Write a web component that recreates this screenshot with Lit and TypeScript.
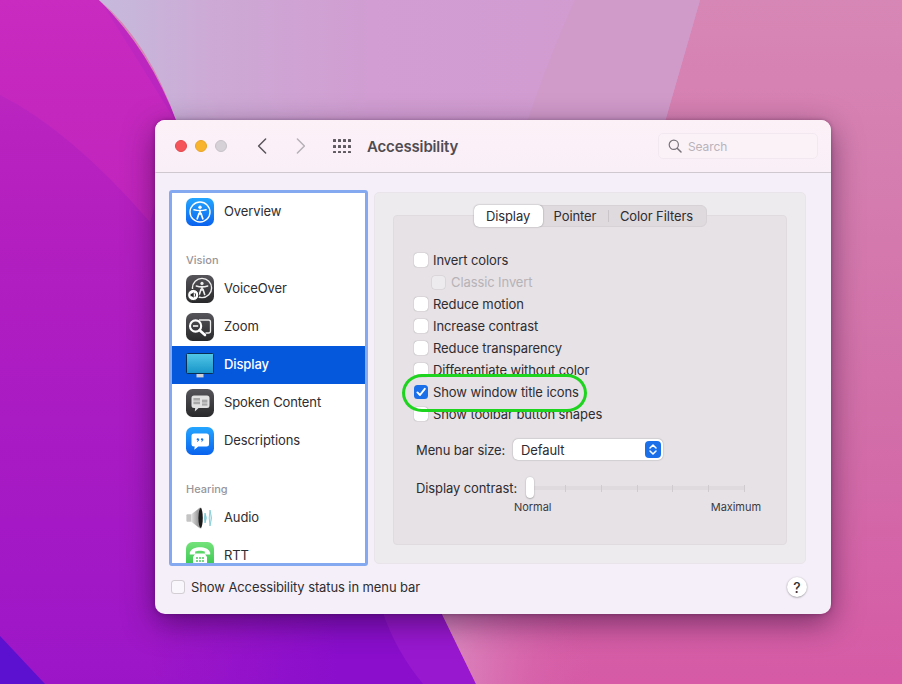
import { LitElement, html, css, svg } from "lit";
import { customElement } from "lit/decorators.js";

const person = (cx: number, cy: number, s = 1, c = "#fff") => svg`
  <g transform="translate(${cx} ${cy}) scale(${s})" fill="none" stroke="${c}">
    <circle cx="0" cy="-5.2" r="1.7" fill="${c}" stroke="none"/>
    <path d="M-6 -2.6 C-3 -1.6 3 -1.6 6 -2.6" stroke-width="1.6" stroke-linecap="round"/>
    <path d="M0 -2 V1.6 M-1 1 L-2.8 6.4 M1 1 L2.8 6.4" stroke-width="1.7" stroke-linecap="round"/>
  </g>`;

const squareDefs = svg`
  <defs>
    <linearGradient id="blue" x1="0" y1="0" x2="0" y2="1"><stop offset="0" stop-color="#24a6ff"/><stop offset="1" stop-color="#0a62ee"/></linearGradient>
    <linearGradient id="dark" x1="0" y1="0" x2="0" y2="1"><stop offset="0" stop-color="#55555a"/><stop offset="1" stop-color="#29292b"/></linearGradient>
    <linearGradient id="green" x1="0" y1="0" x2="0" y2="1"><stop offset="0" stop-color="#74e27a"/><stop offset="1" stop-color="#2fc24a"/></linearGradient>
    <linearGradient id="screen" x1="0" y1="0" x2="0" y2="1"><stop offset="0" stop-color="#52c8e8"/><stop offset="1" stop-color="#1794c8"/></linearGradient>
    <linearGradient id="cone" x1="0" y1="0" x2="1" y2="0"><stop offset="0" stop-color="#e6e6e6"/><stop offset=".65" stop-color="#9a9a9a"/><stop offset="1" stop-color="#d6d6d6"/></linearGradient>
  </defs>`;

const icons: Record<string, unknown> = {
  overview: svg`${squareDefs}<rect width="28" height="28" rx="6.5" fill="url(#blue)"/>
    <circle cx="14" cy="14" r="10" fill="none" stroke="#fff" stroke-width="1.4"/>${person(14, 14.4)}`,
  voiceover: svg`${squareDefs}<rect width="28" height="28" rx="6.5" fill="url(#dark)"/>
    <circle cx="16" cy="13" r="9.6" fill="none" stroke="#eee" stroke-width="1.4"/>${person(16, 13.4, 0.95, "#eee")}
    <circle cx="7.2" cy="20" r="5.6" fill="#fff" stroke="#333" stroke-width="1"/>
    <path d="M4.6 18.8 h1.3 l1.8-1.6 v5.6 l-1.8-1.6 h-1.3z" fill="#222"/>
    <path d="M9 18.2 q1.2 1.8 0 3.6" fill="none" stroke="#222" stroke-width=".9"/>`,
  zoom: svg`${squareDefs}<rect width="28" height="28" rx="6.5" fill="url(#dark)"/>
    <path d="M13 7 h9.5 a2 2 0 0 1 2 2 v9 a2 2 0 0 1-2 2 h-3" fill="none" stroke="#eee" stroke-width="1.3"/>
    <circle cx="9.6" cy="13" r="5.6" fill="none" stroke="#fff" stroke-width="2.1"/>
    <path d="M7 13 h5.2" stroke="#eee" stroke-width="1.7"/>
    <path d="M13.6 17.2 L19 22" stroke="#fff" stroke-width="2.6" stroke-linecap="round"/>`,
  display: svg`${squareDefs}<rect x="10.5" y="22" width="7" height="4.4" fill="#cfcfd6"/>
    <rect x="0.5" y="2.5" width="27" height="20" rx="1" fill="url(#screen)" stroke="#0a2f55" stroke-width="1"/>`,
  spoken: svg`${squareDefs}<rect width="28" height="28" rx="6.5" fill="url(#dark)"/>
    <path d="M8 6.5 h13 a2.5 2.5 0 0 1 2.5 2.5 v7.5 a2.5 2.5 0 0 1-2.5 2.5 h-8.4 l-3.8 3.4 .4-3.4 H8 a2.5 2.5 0 0 1-2.5-2.5 V9 A2.5 2.5 0 0 1 8 6.5z" fill="#e2e2e2"/>
    <rect x="7.4" y="9" width="6.6" height="2.6" fill="#a8a8a8"/><rect x="7.4" y="12.6" width="6.6" height="2.6" fill="#a8a8a8"/>
    <rect x="16" y="10.6" width="5.4" height="3" fill="#a8a8a8"/><rect x="16" y="14.4" width="5.4" height="2.2" fill="#a8a8a8"/>`,
  descriptions: svg`${squareDefs}<rect width="28" height="28" rx="6.5" fill="url(#blue)"/>
    <path d="M8 6.5 h12.5 a2.5 2.5 0 0 1 2.5 2.5 v8 a2.5 2.5 0 0 1-2.5 2.5 h-8.2 l-4 3.2 .4-3.2 H8 a2.5 2.5 0 0 1-2.5-2.5 V9 A2.5 2.5 0 0 1 8 6.5z" fill="#fff"/>
    <circle cx="11.8" cy="12.4" r="1.15" fill="#1272ec"/><circle cx="16" cy="12.4" r="1.15" fill="#1272ec"/>
    <path d="M12.8 12.4 q0 1.6-1.5 2.2 M17 12.4 q0 1.6-1.5 2.2" fill="none" stroke="#1272ec" stroke-width=".9"/>`,
  audio: svg`${squareDefs}<rect x="0.4" y="10.2" width="5" height="7.6" rx="1" fill="#c4c4c4"/>
    <path d="M5 10.4 L14 3.6 Q16 3 16 5 V23 Q16 25 14 24.4 L5 17.6z" fill="url(#cone)"/>
    <ellipse cx="14.6" cy="14" rx="2.2" ry="10" fill="#1c1c1c"/>
    <path d="M19 9 q2.6 5 0 10 M19 9 q-1.2 5 0 10" fill="#8cd4de" stroke="#7cc6d2" stroke-width=".8"/>
    <path d="M24 6 q3 8 0 16 M24 6 q-1.6 8 0 16" fill="#d2f0f4" stroke="#84ccd6" stroke-width=".9"/>`,
  rtt: svg`${squareDefs}<rect width="28" height="28" rx="6.5" fill="url(#green)"/>
    <path d="M3.8 10.6 C6 3.4 22 3.4 24.2 10.6 V12.6 H18.8 V9.6 C16.4 8.6 11.6 8.6 9.2 9.6 V12.6 H3.8z" fill="#fff"/>
    <path d="M9.4 11.4 H18.6 L21 15 V24 H7 V15z" fill="#fff"/>
    <g fill="#4ecb60"><circle cx="11" cy="16" r="1"/><circle cx="14" cy="16" r="1"/><circle cx="17" cy="16" r="1"/><circle cx="11" cy="19" r="1"/><circle cx="14" cy="19" r="1"/><circle cx="17" cy="19" r="1"/><circle cx="11" cy="22" r="1"/><circle cx="14" cy="22" r="1"/><circle cx="17" cy="22" r="1"/></g>`,
};

const side = [
  { k: "overview", t: "Overview" },
  { h: "Vision" },
  { k: "voiceover", t: "VoiceOver" },
  { k: "zoom", t: "Zoom" },
  { k: "display", t: "Display", sel: true },
  { k: "spoken", t: "Spoken Content" },
  { k: "descriptions", t: "Descriptions" },
  { h: "Hearing" },
  { k: "audio", t: "Audio" },
  { k: "rtt", t: "RTT" },
];

const opts = [
  { t: "Invert colors" },
  { t: "Classic Invert", sub: true },
  { t: "Reduce motion" },
  { t: "Increase contrast" },
  { t: "Reduce transparency" },
  { t: "Differentiate without color" },
  { t: "Show window title icons", on: true },
  { t: "Show toolbar button shapes" },
];

@customElement("app-root")
export class AppRoot extends LitElement {
  static styles = css`
    :host {
      display: block; position: relative; width: 902px; height: 684px; overflow: hidden;
      box-sizing: border-box; padding: 120px 0 0 155px;
      font-family: Inter, "Liberation Sans", sans-serif; font-size: 13px; color: #2e2c30;
      letter-spacing: -0.1px;
    }
    .wall { position: absolute; inset: 0; width: 902px; height: 684px; }
    .win {
      position: relative; width: 676px; height: 494px; border-radius: 10px; overflow: hidden;
      background: #f4eff8; display: flex; flex-direction: column;
    }
    .shadow { position: absolute; left: 155px; top: 120px; width: 676px; height: 494px; border-radius: 10px;
      box-shadow: 0 9px 30px rgba(30, 0, 40, .5), 0 0 4px rgba(30, 0, 40, .3); }
    .bar { flex: none; height: 52px; display: flex; align-items: center; background: linear-gradient(#fdf1f8, #f9eff7);
      border-bottom: 1px solid #cfc8cf; padding-left: 20px; }
    .dot { width: 12px; height: 12px; border-radius: 50%; margin-right: 8px; box-sizing: border-box; }
    .red { background: #f5555a; border: 1px solid #e4474c; }
    .yel { background: #f9b42d; border: 1px solid #e8a526; }
    .gry { background: #d5d1d7; border: 1px solid #c6c2c8; margin-right: 0; }
    .nav { display: block; }
    .back { margin-left: 30px; }
    .fwd { margin-left: 29px; }
    .grid { margin-left: 27px; }
    .title { margin-left: 16px; font-size: 15px; font-weight: 600; color: #504c52; letter-spacing: -0.15px; }
    .search { margin-left: auto; margin-right: 13px; width: 160px; height: 26px; box-sizing: border-box;
      border: 1px solid #f2e8f0; border-radius: 5px; display: flex; align-items: center; padding-left: 9px; gap: 6px;
      color: #b9b3ba; font-size: 12px; background: #fbf2f8; }
    .body { flex: none; display: flex; gap: 6px; padding: 17px 25px 0 14px; }
    .sidebar { flex: none; width: 199px; height: 376px; box-sizing: border-box; border: 3px solid #84a9f0; border-radius: 3px;
      background: #fff; overflow: hidden; }
    .row { height: 38px; display: flex; align-items: center; padding-left: 14px; gap: 10px; }
    .row svg { flex: none; display: block; }
    .row span { padding-bottom: 2px; }
    .row.sel { background: #0558dc; color: #fff; font-weight: 500; }
    .head { height: 39px; box-sizing: border-box; padding: 22px 0 0 14px; font-size: 11px; font-weight: 500; color: #98959a; line-height: 14px; letter-spacing: 0; }
    .group { flex: none; margin-top: 2px; width: 432px; height: 372px; box-sizing: border-box; padding: 22px 18px 18px;
      background: #eeebef; border: 1px solid #e8e4e9; border-radius: 5px; }
    .inner { height: 100%; box-sizing: border-box; background: #e6e2e6; border: 1px solid #dfdbdf; border-radius: 4px;
      display: flex; flex-direction: column; padding-left: 20px; }
    .tabs { align-self: center; margin: -11px 0 0 -20px; display: flex; height: 22px; box-sizing: border-box; border-radius: 6px;
      background: #dedade; border: 1px solid #d6d2d6; width: 233px; align-items: stretch; }
    .tab { display: flex; align-items: center; justify-content: center; padding-bottom: 1px; box-sizing: border-box; }
    .tab.a { width: 69px; background: #fff; border-radius: 5px; box-shadow: 0 0 1.5px rgba(0,0,0,.45); margin: -1px 0 -1px -1px; }
    .tab.b { width: 65px; }
    .tab.c { flex: 1; position: relative; }
    .tab.c::before { content: ""; position: absolute; left: 0; top: 4px; bottom: 4px; width: 1px; background: #c9c5c9; }
    .opts { margin-top: 22px; display: flex; flex-direction: column; }
    .opt { position: relative; height: 22px; display: flex; align-items: center; gap: 5px; }
    .opt.sub { padding-left: 18px; gap: 6px; color: #b6b2b7; }
    .cb { flex: none; width: 14px; height: 14px; box-sizing: border-box; border-radius: 3.5px; background: #fff;
      box-shadow: 0 0 1px rgba(0,0,0,.5); display: flex; align-items: center; justify-content: center; }
    .sub .cb { width: 13px; height: 13px; border-radius: 3px; background: #eeebee; box-shadow: 0 0 0 .5px rgba(0,0,0,.1); }
    .cb.on { background: #1b6fe8; box-shadow: none; }
    .ring { position: absolute; left: -12px; top: -7px; width: 185px; height: 38px; box-sizing: border-box;
      border: 3px solid #1fd41f; border-radius: 20px / 19px; z-index: 2; }
    .menu { margin-top: 14px; height: 21px; display: flex; align-items: center; padding-left: 2px; }
    .menu .lab { width: 97px; }
    .sel-box { width: 150px; height: 21px; box-sizing: border-box; border-radius: 5px; background: #fff; box-shadow: 0 0 1.5px rgba(0,0,0,.4);
      display: flex; align-items: center; padding-left: 8px; position: relative; }
    .stepper { position: absolute; right: 2px; top: 2px; width: 16px; height: 17px; border-radius: 4px; background: #1b6fe8; display: flex; align-items: center; justify-content: center; }
    .slider { margin-top: 17px; height: 22px; display: flex; align-items: center; padding-left: 2px; }
    .slider .lab { width: 114px; }
    .track { position: relative; width: 215px; height: 4px; border-radius: 2px; background: #dedade; display: flex; justify-content: space-between; align-items: center; padding: 0 0 0 35px; box-sizing: border-box; }
    .tick { width: 1px; height: 7px; background: #cfcbcf; }
    .thumb { position: absolute; left: -4px; top: -9px; width: 8px; height: 21px; border-radius: 4px; background: #fff; box-shadow: 0 0.5px 1.5px rgba(0,0,0,.4); }
    .scale { margin: 1px 0 0 100px; width: 247px; display: flex; justify-content: space-between; font-size: 11px; color: #3c3a3e; letter-spacing: -0.05px; line-height: 14px; }
    .foot { flex: 1; display: flex; align-items: center; gap: 6px; padding: 0 24px 6px 16px; }
    .foot .help { margin-left: auto; width: 20px; height: 20px; border-radius: 50%; background: #fff; box-shadow: 0 0.5px 2px rgba(0,0,0,.4);
      display: flex; align-items: center; justify-content: center; font-size: 14px; font-weight: 500; color: #333; }
    .foot .cb { background: #faf7fc; box-shadow: inset 0 0 0 1px #d2ced4; }
  `;

  render() {
    return html`
      <svg class="wall" viewBox="0 0 902 684" preserveAspectRatio="none">
        <defs>
          <linearGradient id="mag" x1="0" y1="0" x2="0" y2="1">
            <stop offset="0" stop-color="#c02ac0"/><stop offset=".3" stop-color="#b41fbf"/><stop offset="1" stop-color="#9c16c8"/>
          </linearGradient>
          <linearGradient id="wedge" x1="0" y1="0" x2="0" y2="1">
            <stop offset="0" stop-color="#c92ac0"/><stop offset="1" stop-color="#bf24bc"/>
          </linearGradient>
          <linearGradient id="pink" x1="0" y1="0" x2="0" y2="1">
            <stop offset="0" stop-color="#d787b5"/><stop offset=".6" stop-color="#d26fa9"/><stop offset="1" stop-color="#d65aa6"/>
          </linearGradient>
          <linearGradient id="lav" x1="0" y1="0" x2="1" y2="0">
            <stop offset="0" stop-color="#c6badc"/><stop offset=".2" stop-color="#cda9d5"/><stop offset=".45" stop-color="#d19dd2"/><stop offset="1" stop-color="#d29bd0"/>
          </linearGradient>
          <linearGradient id="edge" gradientUnits="userSpaceOnUse" x1="450" y1="0" x2="600" y2="0">
            <stop offset="0" stop-color="#dc8ac0" stop-opacity=".9"/><stop offset="1" stop-color="#d65aa6" stop-opacity="0"/>
          </linearGradient>
          <linearGradient id="deep" gradientUnits="userSpaceOnUse" x1="150" y1="0" x2="340" y2="0">
            <stop offset="0" stop-color="#8a0ecc" stop-opacity="0"/><stop offset="1" stop-color="#8a0ecc"/>
          </linearGradient>
        </defs>
        <rect width="902" height="684" fill="url(#mag)"/>
        <path d="M0 0 H100 L178 125 L150 222 Q70 130 0 95z" fill="url(#wedge)"/>
        <rect x="150" y="605" width="300" height="79" fill="url(#deep)"/>
        <path d="M0 636 L45 684 H0z" fill="#5c10d0"/>
        <path d="M382 610 Q395 650 423 684 H476 L440 610z" fill="#9818d0"/>
        <path d="M99 0 H902 V684 H476 L440 610 L178 125 Q150 50 99 0z" fill="url(#pink)"/>
        <path d="M99 0 H700 L664 125 H178 Q148 40 99 0z" fill="url(#lav)"/>
        <path d="M575 0 H700 L664 125 H526 Q552 50 575 0z" fill="#d09ac9"/>
        <path d="M440 610 L476 684 H620 V610z" fill="url(#edge)"/>
      </svg>
      <div class="shadow"></div>
      <div class="win">
        <div class="bar">
          <span class="dot red"></span><span class="dot yel"></span><span class="dot gry"></span>
          <svg class="nav back" width="10" height="18" viewBox="0 0 10 18"><path d="M8.6 2 L1.6 9 L8.6 16" fill="none" stroke="#5a565c" stroke-width="1.5" stroke-linecap="round" stroke-linejoin="round"/></svg>
          <svg class="nav fwd" width="10" height="18" viewBox="0 0 10 18"><path d="M1.4 2 L8.4 9 L1.4 16" fill="none" stroke="#b5b0b7" stroke-width="1.5" stroke-linecap="round" stroke-linejoin="round"/></svg>
          <svg class="nav grid" width="18" height="14" viewBox="0 0 18 14" fill="#5f5b61">
            ${[1, 7, 13].map((y) => [0, 5, 10, 15].map((x) => svg`<rect x="${x}" y="${y - 1}" width="3" height="3" rx=".5"/>`))}
          </svg>
          <span class="title">Accessibility</span>
          <div class="search">
            <svg width="14" height="14" viewBox="0 0 14 14"><circle cx="5.8" cy="5.8" r="4.6" fill="none" stroke="#78747a" stroke-width="1.2"/><path d="M9.2 9.2 L13 13" stroke="#78747a" stroke-width="1.5" stroke-linecap="round"/></svg>
            Search
          </div>
        </div>
        <div class="body">
          <div class="sidebar">
            ${side.map((s) =>
              s.h
                ? html`<div class="head">${s.h}</div>`
                : html`<div class="row ${s.sel ? "sel" : ""}">
                    <svg width="28" height="28" viewBox="0 0 28 28">${icons[s.k as string]}</svg>
                    <span>${s.t}</span>
                  </div>`
            )}
          </div>
          <div class="group">
            <div class="inner">
              <div class="tabs">
                <div class="tab a">Display</div><div class="tab b">Pointer</div><div class="tab c">Color Filters</div>
              </div>
              <div class="opts">
                ${opts.map(
                  (o) => html`<div class="opt ${o.sub ? "sub" : ""}">
                    <span class="cb ${o.on ? "on" : ""}">
                      ${o.on ? html`<svg width="12" height="12" viewBox="0 0 12 12"><path d="M2.4 6.4 L5 9 L9.8 2.8" fill="none" stroke="#fff" stroke-width="1.9" stroke-linecap="round" stroke-linejoin="round"/></svg>` : ""}
                    </span>
                    <span>${o.t}</span>
                    ${o.on ? html`<span class="ring"></span>` : ""}
                  </div>`
                )}
              </div>
              <div class="menu">
                <span class="lab">Menu bar size:</span>
                <div class="sel-box">Default
                  <span class="stepper"><svg width="10" height="13" viewBox="0 0 10 13"><path d="M2 5 L5 2 L8 5 M2 8 L5 11 L8 8" fill="none" stroke="#fff" stroke-width="1.5" stroke-linecap="round" stroke-linejoin="round"/></svg></span>
                </div>
              </div>
              <div class="slider">
                <span class="lab">Display contrast:</span>
                <div class="track">
                  <span class="tick"></span><span class="tick"></span><span class="tick"></span><span class="tick"></span><span class="tick"></span><span class="tick"></span>
                  <span class="thumb"></span>
                </div>
              </div>
              <div class="scale"><span>Normal</span><span>Maximum</span></div>
            </div>
          </div>
        </div>
        <div class="foot">
          <span class="cb"></span>
          <span>Show Accessibility status in menu bar</span>
          <span class="help">?</span>
        </div>
      </div>
    `;
  }
}
